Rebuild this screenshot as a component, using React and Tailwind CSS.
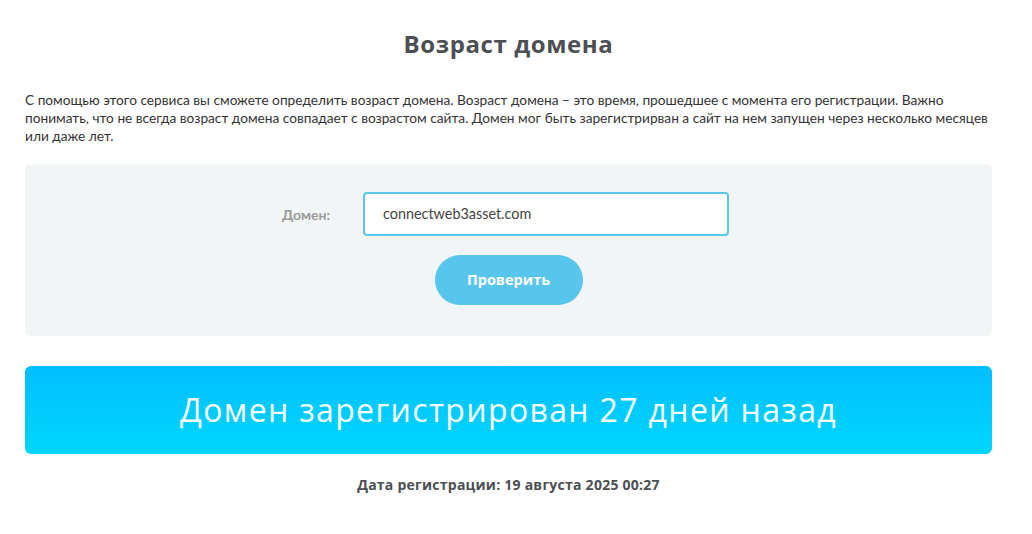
const App = () => {
    return (
        <div className="w-[1032px] h-[534px] bg-white overflow-hidden">
            <div className="pl-[25px] pr-[40px] pt-[28px] w-full">
                <h1 className="font-['Open_Sans'] text-center text-[24px] tracking-[0.6px] font-bold text-[#4b4f54] leading-[32px]">
                    Возраст домена
                </h1>

                <p className="font-['Lato'] mt-[31px] text-[13.7px] leading-[18px] text-[#333]">
                    С помощью этого сервиса вы сможете определить возраст домена. Возраст домена – это время, прошедшее с момента его регистрации. Важно понимать, что не всегда возраст домена совпадает с возрастом сайта. Домен мог быть зарегистрирван а сайт на нем запущен через несколько месяцев или даже лет.
                </p>

                <div className="mt-[19px] h-[172px] bg-[#f2f5f6] rounded-md flex flex-col items-center pt-[28px]">
                    <div className="flex items-center ml-[-6px]">
                        <label className="font-['Lato'] w-[81px] text-[14px] font-bold text-[#999]">
                            Домен:
                        </label>
                        <div className="font-['Lato'] w-[366px] h-[44px] bg-white border-2 border-[#5bc5ea] rounded-[4px] flex items-center pl-[18px] text-[14.4px] text-[#444]">
                            connectweb3asset.com
                        </div>
                    </div>
                    <button className="font-['Open_Sans'] mt-[19px] w-[148px] h-[50px] rounded-full bg-[#58c5ec] text-white text-[14.5px] font-bold">
                        Проверить
                    </button>
                </div>

                <div className="mt-[30px] h-[88px] rounded-md bg-gradient-to-b from-[#00bfff] to-[#00d6fd] flex items-center justify-center">
                    <span className="font-['Open_Sans'] text-white text-[32px] font-normal tracking-[1.35px]">
                        Домен зарегистрирован 27 дней назад
                    </span>
                </div>

                <p className="font-['Open_Sans'] mt-[20px] text-center text-[14px] tracking-[0.25px] font-bold text-[#4b4f54]">
                    Дата регистрации: 19 августа 2025 00:27
                </p>
            </div>
        </div>
    );
};

export default App;
